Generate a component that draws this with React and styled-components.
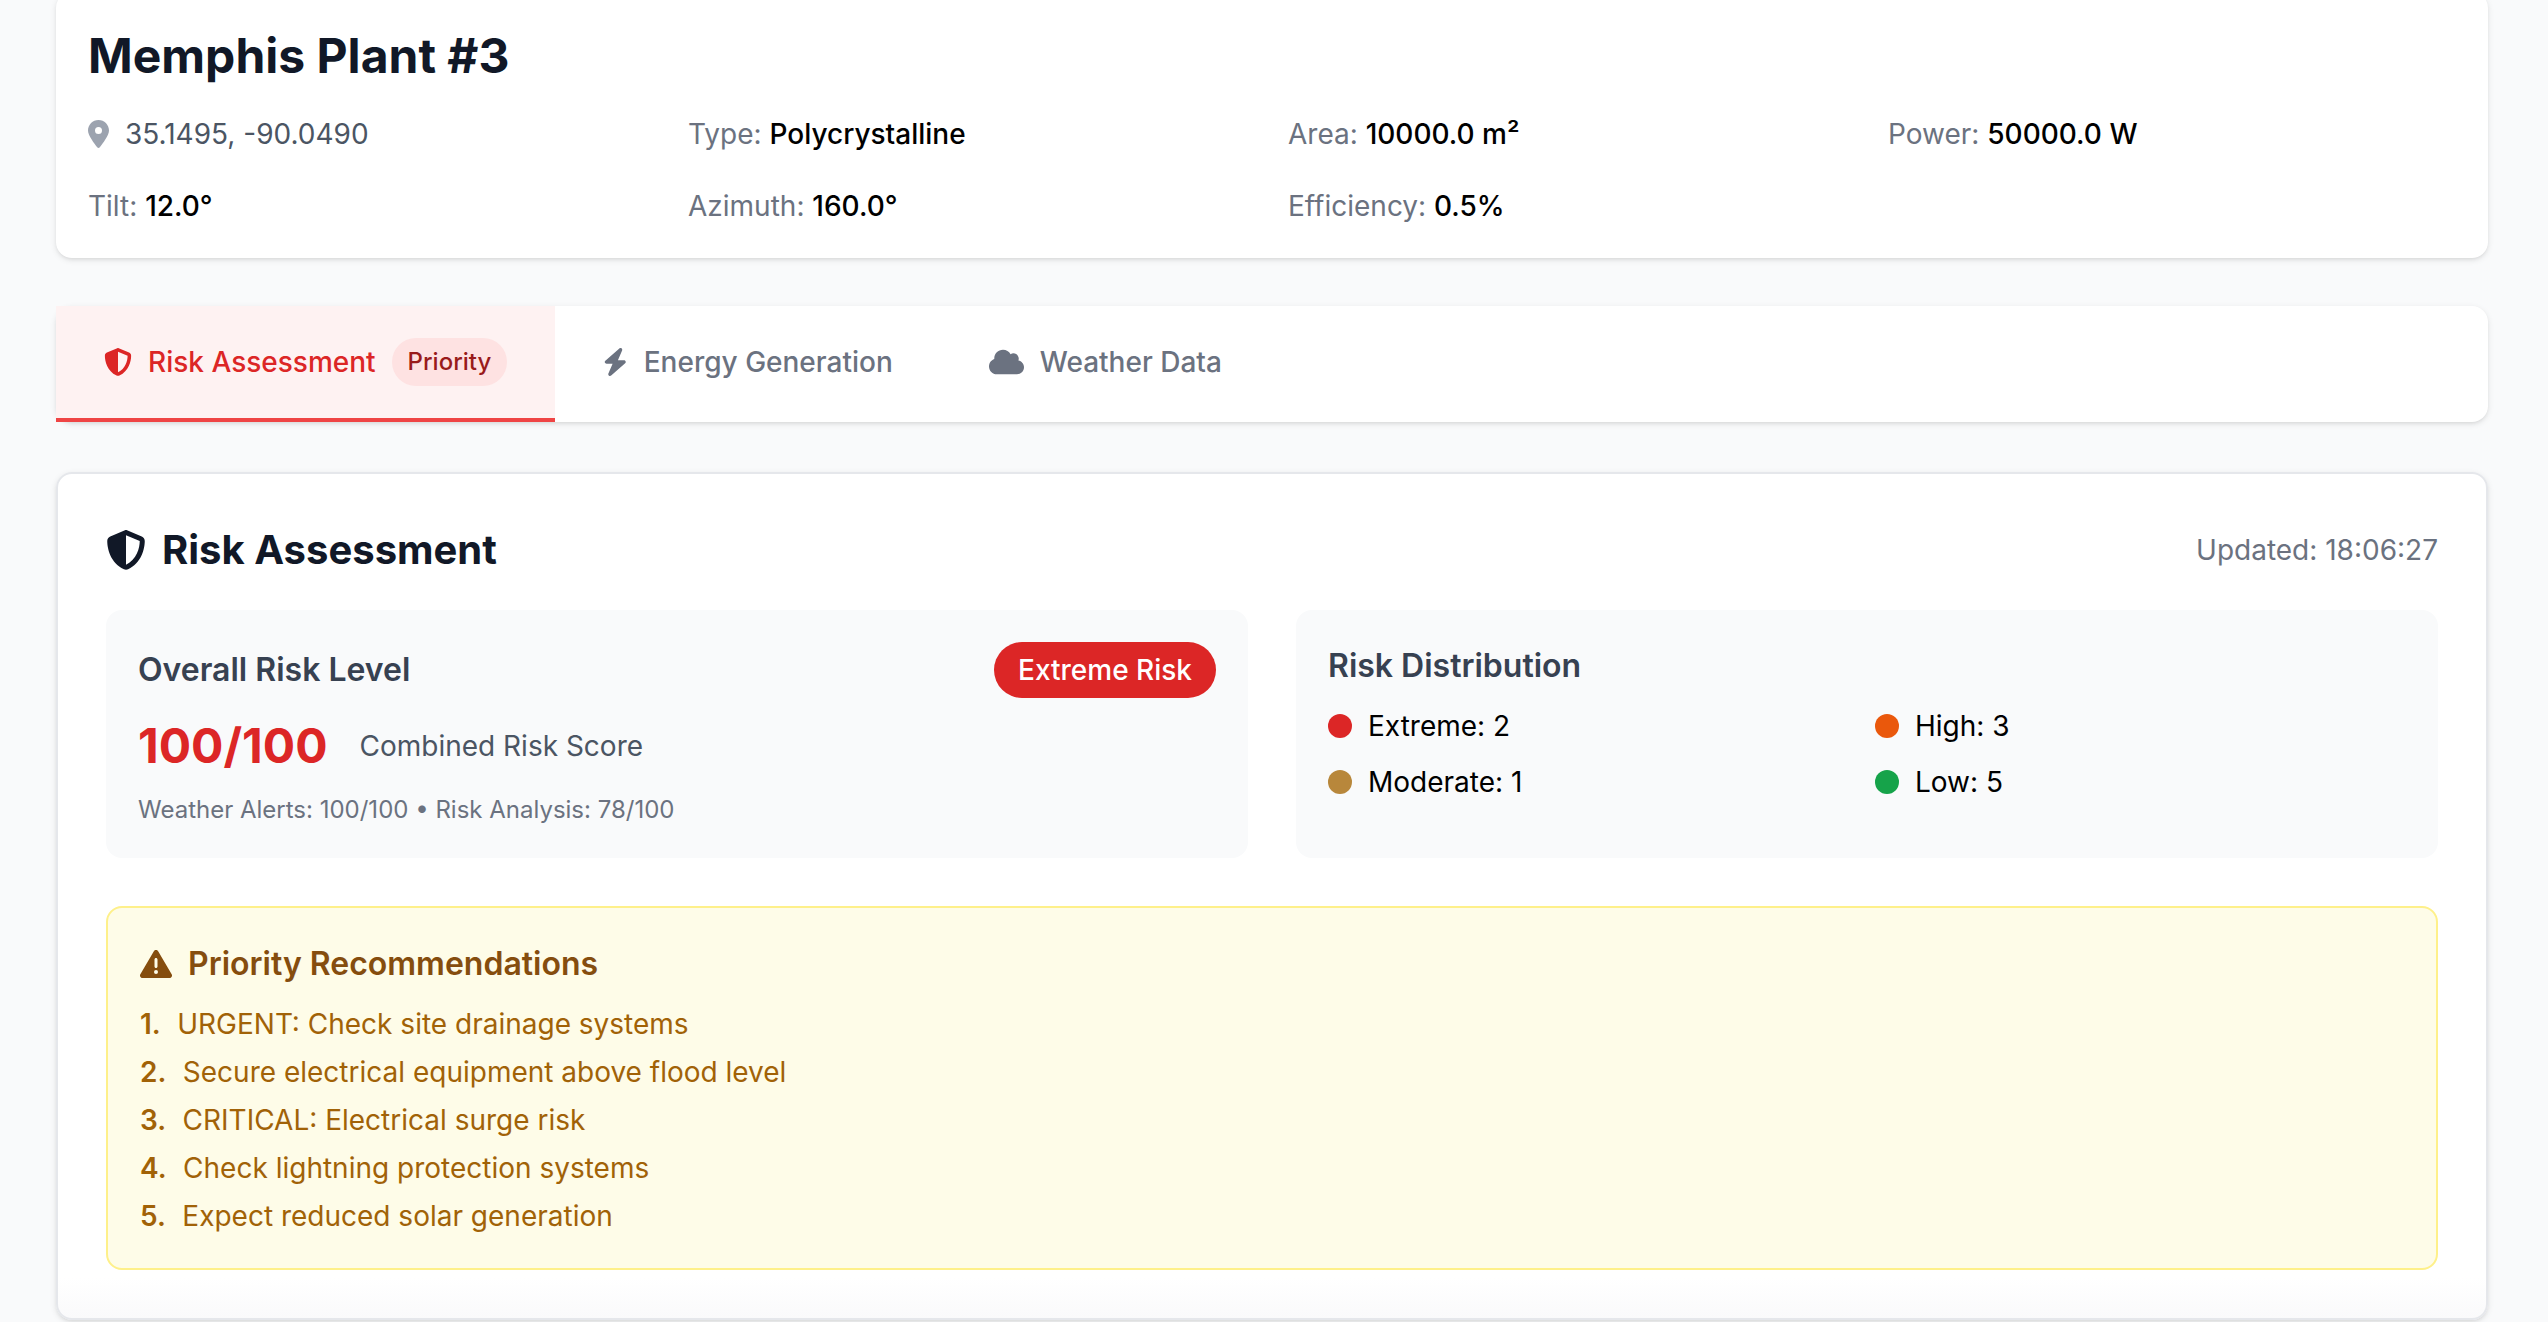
import React from "react";
import styled, { createGlobalStyle } from "styled-components";
import { FaLocationDot, FaShieldHalved, FaBolt, FaCloud, FaTriangleExclamation } from "react-icons/fa6";

const GlobalStyle = createGlobalStyle`
  * { box-sizing: border-box; }
  html, body { margin: 0; padding: 0; height: 100%; overflow: hidden; }
  body {
    background: #f9fafb;
    color: #000;
    font-family: Inter, "Liberation Sans", sans-serif;
    font-size: 28px;
    line-height: 40px;
  }
`;

const specs = [
  ["Type", "Polycrystalline"],
  ["Area", "10000.0 m²"],
  ["Power", "50000.0 W"],
  ["Tilt", "12.0°"],
  ["Azimuth", "160.0°"],
  ["Efficiency", "0.5%"],
];

const risks = [
  ["Extreme: 2", "#dc2626"],
  ["High: 3", "#ea580c"],
  ["Moderate: 1", "#b8873b"],
  ["Low: 5", "#16a34a"],
];

const recommendations = [
  "URGENT: Check site drainage systems",
  "Secure electrical equipment above flood level",
  "CRITICAL: Electrical surge risk",
  "Check lightning protection systems",
  "Expect reduced solar generation",
];

export default function App() {
  return (
    <Page>
      <GlobalStyle />
      <SiteCard>
        <SiteTitle>Memphis Plant #3</SiteTitle>
        <SpecGrid>
          <Coordinates>
            <PinIcon />
            35.1495, -90.0490
          </Coordinates>
          {specs.map(([label, value]) => (
            <div key={label}>
              {label}: <strong>{value}</strong>
            </div>
          ))}
        </SpecGrid>
      </SiteCard>

      <TabBar>
        <Tab $active>
          <FaShieldHalved />
          Risk Assessment
          <PriorityTag>Priority</PriorityTag>
        </Tab>
        <Tab>
          <BoltIcon />
          Energy Generation
        </Tab>
        <Tab>
          <CloudIcon />
          Weather Data
        </Tab>
      </TabBar>

      <Panel>
        <PanelHeader>
          <PanelTitle>
            <FaShieldHalved />
            Risk Assessment
          </PanelTitle>
          <Updated>Updated: 18:06:27</Updated>
        </PanelHeader>

        <SummaryGrid>
          <SummaryBox>
            <LevelRow>
              <BoxTitle>Overall Risk Level</BoxTitle>
              <RiskBadge>Extreme Risk</RiskBadge>
            </LevelRow>
            <ScoreRow>
              <Score>100/100</Score>
              <ScoreLabel>Combined Risk Score</ScoreLabel>
            </ScoreRow>
            <ScoreNote>Weather Alerts: 100/100 • Risk Analysis: 78/100</ScoreNote>
          </SummaryBox>

          <SummaryBox>
            <BoxTitle>Risk Distribution</BoxTitle>
            <Distribution>
              {risks.map(([label, color]) => (
                <RiskItem key={label}>
                  <Dot $color={color} />
                  {label}
                </RiskItem>
              ))}
            </Distribution>
          </SummaryBox>
        </SummaryGrid>

        <Recommendations>
          <RecTitle>
            <FaTriangleExclamation />
            Priority Recommendations
          </RecTitle>
          <RecList>
            {recommendations.map((text) => (
              <li key={text}>{text}</li>
            ))}
          </RecList>
        </Recommendations>
      </Panel>
    </Page>
  );
}

const Page = styled.div`
  margin-top: -8px;
  padding: 0 60px 0 56px;
`;

const cardShadow = `
  box-shadow: 0 2px 6px 0 rgba(0, 0, 0, 0.1), 0 2px 4px -2px rgba(0, 0, 0, 0.1);
`;

const SiteCard = styled.section`
  background: #fff;
  border-radius: 16px;
  padding: 32px;
  ${cardShadow}
`;

const SiteTitle = styled.h1`
  margin: 0 0 26px;
  color: #111827;
  font-size: 48px;
  line-height: 64px;
  font-weight: 700;
`;

const SpecGrid = styled.div`
  display: grid;
  grid-template-columns: repeat(4, 1fr);
  gap: 32px;
  color: #6b7280;
  strong {
    color: #000;
    font-weight: 500;
  }
`;

const Coordinates = styled.div`
  display: flex;
  align-items: center;
  gap: 16px;
  color: #4b5563;
`;

const PinIcon = styled(FaLocationDot)`
  color: #9ca3af;
  width: 21px;
  height: 28px;
  flex: none;
`;

const TabBar = styled.nav`
  display: flex;
  margin-top: 48px;
  background: #fff;
  border-radius: 16px;
  ${cardShadow}
`;

const Tab = styled.div`
  display: flex;
  align-items: center;
  gap: 16px;
  padding: 32px 48px;
  border-bottom: 4px solid ${(p) => (p.$active ? "#ef4444" : "transparent")};
  background: ${(p) => (p.$active ? "#fef2f2" : "transparent")};
  color: ${(p) => (p.$active ? "#dc2626" : "#6b7280")};
  font-weight: 500;
  svg {
    height: 28px;
    flex: none;
  }
`;

const BoltIcon = styled(FaBolt)`
  width: 24.5px;
`;

const CloudIcon = styled(FaCloud)`
  width: 35px;
`;

const PriorityTag = styled.span`
  padding: 8px 16px;
  border-radius: 999px;
  background: #fee2e2;
  color: #991b1b;
  font-size: 24px;
  line-height: 32px;
`;

const Panel = styled.section`
  margin-top: 50px;
  padding: 48px;
  background: linear-gradient(to bottom, #fff calc(100% - 40px), #fafafb);
  border: 2px solid #e5e7eb;
  border-radius: 16px;
  ${cardShadow}
`;

const PanelHeader = styled.header`
  display: flex;
  justify-content: space-between;
  align-items: center;
  margin-bottom: 32px;
`;

const PanelTitle = styled.h2`
  display: flex;
  align-items: center;
  gap: 16px;
  margin: 0;
  color: #111827;
  font-size: 40px;
  line-height: 56px;
  font-weight: 700;
`;

const Updated = styled.span`
  color: #6b7280;
`;

const SummaryGrid = styled.div`
  display: grid;
  grid-template-columns: 1fr 1fr;
  gap: 48px;
`;

const SummaryBox = styled.div`
  padding: 32px;
  background: #f9fafb;
  border-radius: 16px;
`;

const LevelRow = styled.div`
  display: flex;
  justify-content: space-between;
  align-items: center;
  margin-bottom: 16px;
`;

const BoxTitle = styled.h3`
  margin: 0;
  color: #374151;
  font-size: 32px;
  line-height: 48px;
  font-weight: 600;
`;

const RiskBadge = styled.span`
  padding: 8px 24px;
  border-radius: 999px;
  background: #dc2626;
  color: #fff;
  font-weight: 500;
`;

const ScoreRow = styled.div`
  display: flex;
  align-items: center;
  gap: 32px;
`;

const Score = styled.span`
  color: #dc2626;
  font-size: 48px;
  line-height: 64px;
  font-weight: 700;
`;

const ScoreLabel = styled.span`
  color: #4b5563;
`;

const ScoreNote = styled.div`
  margin-top: 16px;
  color: #6b7280;
  font-size: 24px;
  line-height: 32px;
`;

const Distribution = styled.div`
  display: grid;
  grid-template-columns: 1fr 1fr;
  gap: 16px;
  margin-top: 16px;
`;

const RiskItem = styled.div`
  display: flex;
  align-items: center;
  gap: 16px;
`;

const Dot = styled.span`
  width: 24px;
  height: 24px;
  border-radius: 50%;
  background: ${(p) => p.$color};
  flex: none;
`;

const Recommendations = styled.div`
  margin-top: 48px;
  padding: 32px;
  background: #fefce8;
  border: 2px solid #fef08a;
  border-radius: 16px;
`;

const RecTitle = styled.h3`
  display: flex;
  align-items: center;
  gap: 16px;
  margin: 0 0 16px;
  color: #854d0e;
  font-size: 32px;
  line-height: 48px;
  font-weight: 600;
`;

const RecList = styled.ol`
  display: flex;
  flex-direction: column;
  gap: 8px;
  margin: 0;
  padding: 0;
  list-style: decimal inside;
  color: #a16207;
  li::marker {
    content: counter(list-item) ".\\00a0\\00a0\\200a";
    font-weight: 600;
    font-variant-numeric: normal;
  }
`;
